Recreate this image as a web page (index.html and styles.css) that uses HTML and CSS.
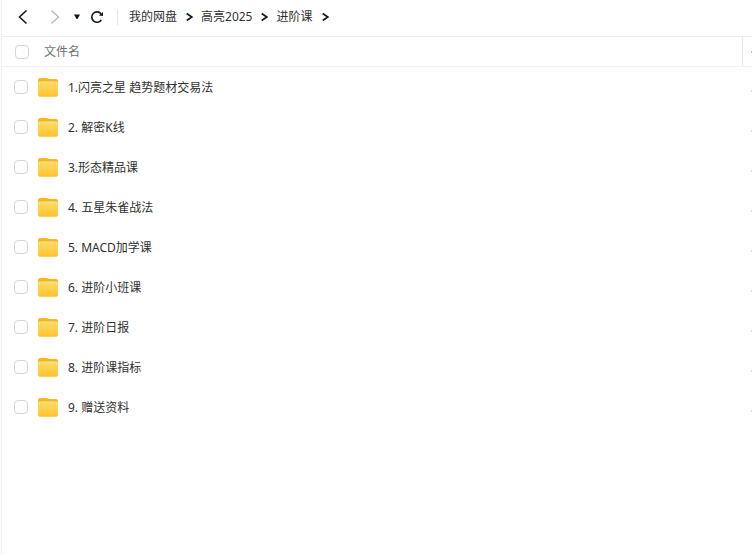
FILE: index.html
```html
<!DOCTYPE html>
<html lang="zh-CN">

<head>
    <meta charset="UTF-8">
    <title>进阶课</title>
    <link rel="stylesheet" href="styles.css">
</head>

<body>
    <svg class="sprite" aria-hidden="true">
        <defs>
            <linearGradient id="front" x1="0" y1="0" x2="0" y2="1">
                <stop offset="0" stop-color="#ffda66" />
                <stop offset="1" stop-color="#ffc52e" />
            </linearGradient>
            <symbol id="folder" viewBox="0 1 20 20">
                <path fill="#fdb515" d="M0 3a2 2 0 0 1 2-2h6q1 0 2 .5l1 .5h7a2 2 0 0 1 2 2v9H0z" />
                <path fill="#ffeaa0" d="M0 6.500a2 2 0 0 1 2-2h16a2 2 0 0 1 2 2V12H0z" />
                <path fill="url(#front)" d="M0 7.500a2 2 0 0 1 2-2h16a2 2 0 0 1 2 2V17.600a2 2 0 0 1-2 2H2a2 2 0 0 1-2-2z" />
                <path fill="none" stroke="#fbb929" stroke-width=".7" d="M.8 18.700q.5.500 1.200.5h16q.7 0 1.200-.5" />
            </symbol>
            <symbol id="arrow" viewBox="0 0 8 10">
                <path fill="none" stroke="#101828" stroke-width="1.700" d="M1.700 1.500 6.800 5 1.700 8.500" />
            </symbol>
        </defs>
    </svg>

    <main class="panel">
        <header class="toolbar">
            <button class="btn btn--back" aria-label="后退">
                <svg width="10" height="16" viewBox="0 0 10 16"><path fill="none" stroke="#101828" stroke-width="1.600" d="M8.500 1.500 1.500 8l7 6.500" /></svg>
            </button>
            <button class="btn btn--forward" aria-label="前进" disabled>
                <svg width="10" height="16" viewBox="0 0 10 16"><path fill="none" stroke="#b9b9b9" stroke-width="1.400" d="M1.500 1.500 8.500 8l-7 6.500" /></svg>
            </button>
            <button class="btn btn--history" aria-label="历史记录">
                <svg width="6" height="6" viewBox="0 0 6 6"><path fill="#101828" d="M0 .5h6L3.500 5h-1z" /></svg>
            </button>
            <button class="btn btn--refresh" aria-label="刷新">
                <svg width="14" height="14" viewBox="0 0 14 14">
                    <path fill="none" stroke="#101828" stroke-width="1.600" d="M11.400 9.800A5.200 5.200 0 1 1 11 3.800" />
                    <path fill="#101828" d="M8.800 5.400 13 2v4z" />
                </svg>
            </button>
            <nav class="path">
                <a href="#">我的网盘</a>
                <svg class="path__arrow"><use href="#arrow" /></svg>
                <a href="#">高亮2025</a>
                <svg class="path__arrow"><use href="#arrow" /></svg>
                <a href="#">进阶课</a>
                <svg class="path__arrow"><use href="#arrow" /></svg>
            </nav>
        </header>

        <table class="files">
            <thead>
                <tr>
                    <th class="files__check"><input type="checkbox" aria-label="全选"></th>
                    <th class="files__name">文件名</th>
                    <th class="files__more"></th>
                </tr>
            </thead>
            <tbody>
                <tr>
                    <td class="files__check"><input type="checkbox" id="f1"></td>
                    <td><label class="file" for="f1"><svg class="file__icon"><use href="#folder" /></svg>1.闪亮之星 趋势题材交易法</label></td>
                    <td class="files__more"></td>
                </tr>
                <tr>
                    <td class="files__check"><input type="checkbox" id="f2"></td>
                    <td><label class="file" for="f2"><svg class="file__icon"><use href="#folder" /></svg>2. 解密K线</label></td>
                    <td class="files__more"></td>
                </tr>
                <tr>
                    <td class="files__check"><input type="checkbox" id="f3"></td>
                    <td><label class="file" for="f3"><svg class="file__icon"><use href="#folder" /></svg>3.形态精品课</label></td>
                    <td class="files__more"></td>
                </tr>
                <tr>
                    <td class="files__check"><input type="checkbox" id="f4"></td>
                    <td><label class="file" for="f4"><svg class="file__icon"><use href="#folder" /></svg>4. 五星朱雀战法</label></td>
                    <td class="files__more"></td>
                </tr>
                <tr>
                    <td class="files__check"><input type="checkbox" id="f5"></td>
                    <td><label class="file" for="f5"><svg class="file__icon"><use href="#folder" /></svg>5. MACD加学课</label></td>
                    <td class="files__more"></td>
                </tr>
                <tr>
                    <td class="files__check"><input type="checkbox" id="f6"></td>
                    <td><label class="file" for="f6"><svg class="file__icon"><use href="#folder" /></svg>6. 进阶小班课</label></td>
                    <td class="files__more"></td>
                </tr>
                <tr>
                    <td class="files__check"><input type="checkbox" id="f7"></td>
                    <td><label class="file" for="f7"><svg class="file__icon"><use href="#folder" /></svg>7. 进阶日报</label></td>
                    <td class="files__more"></td>
                </tr>
                <tr>
                    <td class="files__check"><input type="checkbox" id="f8"></td>
                    <td><label class="file" for="f8"><svg class="file__icon"><use href="#folder" /></svg>8. 进阶课指标</label></td>
                    <td class="files__more"></td>
                </tr>
                <tr>
                    <td class="files__check"><input type="checkbox" id="f9"></td>
                    <td><label class="file" for="f9"><svg class="file__icon"><use href="#folder" /></svg>9. 赠送资料</label></td>
                    <td class="files__more"></td>
                </tr>
            </tbody>
        </table>
    </main>
</body>

</html>
```

FILE: styles.css
```css
* {
    box-sizing: border-box;
}

body {
    margin: 0;
    background-color: #ffffff;
    color: #303030;
    font-family: "Noto Sans", "Noto Sans CJK SC", sans-serif;
    font-size: 12px;
    line-height: 16px;
}

.sprite {
    position: absolute;
    width: 0;
    height: 0;
}

svg {
    display: block;
    flex: none;
}

.panel {
    min-height: 100vh;
    margin-left: 1px;
    border-left: 1px solid #eeeeee;
}

/* toolbar */
.toolbar {
    display: flex;
    align-items: center;
    height: 37px;
    padding: 0 16px 2px;
    border-bottom: 1px solid #eeeeee;
}

.btn {
    display: flex;
    padding: 0;
    border: none;
    background: none;
    cursor: pointer;
}

.btn--forward {
    margin-left: 22px;
}

.btn--history {
    margin-left: 14px;
}

.btn--refresh {
    margin-left: 10px;
}

.path {
    display: flex;
    align-items: center;
    gap: 8px;
    height: 16px;
    margin-left: 13px;
    padding-left: 11px;
    border-left: 1px solid #e2e2e2;
}

.path a {
    color: #303030;
    text-decoration: none;
}

.path__arrow {
    width: 8px;
    height: 10px;
}

/* file list */
.files {
    width: 100%;
    border-collapse: separate;
    border-spacing: 0;
    table-layout: fixed;
}

.files th,
.files td {
    height: 40px;
    padding: 0;
    text-align: left;
    font-weight: normal;
}

.files th {
    height: 30px;
    border-bottom: 1px solid #f2f2f2;
    color: #707070;
}

.files .files__check {
    width: 36px;
    padding-left: 12px;
}

.files th.files__check {
    padding-left: 13px;
}

.files .files__name {
    padding-left: 6px;
}

.files .files__more {
    width: 10px;
}

.files th.files__more {
    border-left: 1px solid #eaeaea;
}

/* edge of the next column */
.files__more::after {
    content: "";
    display: block;
    width: 1px;
    height: 2px;
    margin-left: auto;
    background-color: #d8b894;
}

.files td.files__more::after {
    margin-top: 8px;
    background-color: #ecd9bd;
}

input[type="checkbox"] {
    display: block;
    appearance: none;
    width: 14px;
    height: 14px;
    margin: 0;
    border: 1px solid #d4d4d4;
    border-radius: 4px;
    background-color: #ffffff;
}

.file {
    display: flex;
    align-items: center;
    gap: 10px;
    padding-top: 2px;
}

.file__icon {
    width: 20px;
    height: 20px;
}
```
